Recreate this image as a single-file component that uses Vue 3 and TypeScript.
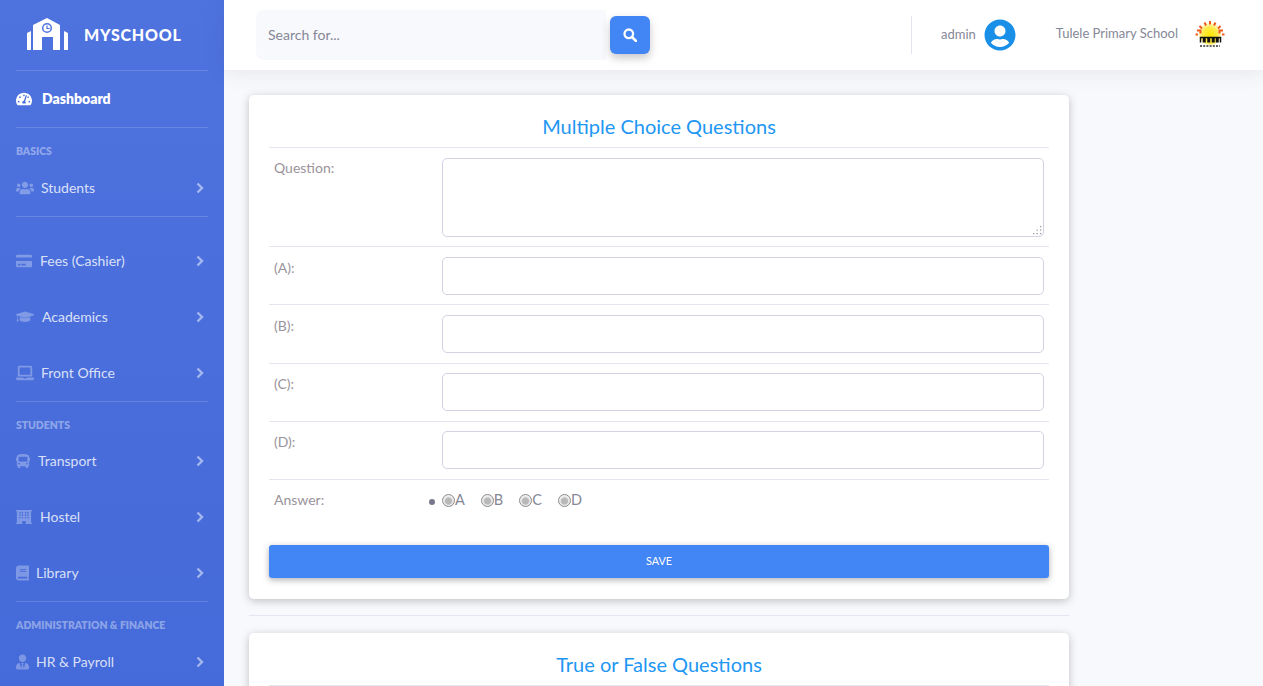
<script setup lang="ts">
interface NavItem { label: string; view: string; icon: string; w: number; gap: number }
type Block = { heading?: string; items: NavItem[]; short?: boolean };

const users = 'M96 224c35.3 0 64-28.7 64-64s-28.7-64-64-64-64 28.7-64 64 28.7 64 64 64zm448 0c35.3 0 64-28.7 64-64s-28.7-64-64-64-64 28.7-64 64 28.7 64 64 64zm32 32h-64c-17.6 0-33.5 7.1-45.1 18.6 40.3 22.1 68.9 62 75.1 109.4h66c17.7 0 32-14.3 32-32v-32c0-35.3-28.7-64-64-64zm-256 0c61.9 0 112-50.1 112-112S381.9 32 320 32 208 82.1 208 144s50.1 112 112 112zm76.8 32h-8.3c-20.8 10-43.9 16-68.5 16s-47.6-6-68.5-16h-8.3C179.6 288 128 339.6 128 403.2V432c0 26.5 21.5 48 48 48h288c26.5 0 48-21.5 48-48v-28.8c0-63.6-51.6-115.2-115.2-115.2zm-223.7-13.4C161.5 263.1 145.6 256 128 256H64c-35.3 0-64 28.7-64 64v32c0 17.7 14.3 32 32 32h65.9c6.3-47.4 34.9-87.3 75.2-109.4z';
const card = 'M0 432c0 26.5 21.5 48 48 48h480c26.5 0 48-21.5 48-48V256H0v176zm192-68c0-6.6 5.4-12 12-12h136c6.6 0 12 5.4 12 12v40c0 6.6-5.4 12-12 12H204c-6.6 0-12-5.4-12-12v-40zm-128 0c0-6.6 5.4-12 12-12h72c6.6 0 12 5.4 12 12v40c0 6.6-5.4 12-12 12H76c-6.6 0-12-5.4-12-12v-40zM576 80v48H0V80c0-26.5 21.5-48 48-48h480c26.5 0 48 21.5 48 48z';
const cap = 'M622 153L343 67c-15-5-31-5-46 0L18 153c-24 7-24 39 0 46l49 15c-11 14-18 31-19 50-6 4-10 10-10 18 0 7 4 13 9 17L24 392c-2 10 5 20 16 20h32c10 0 18-10 16-20L64 299c5-4 9-10 9-17 0-8-4-14-11-18 1-18 10-34 24-44l211 65c10 3 28 7 46 0l279-86c24-7 24-39 0-46zM352 298c-29 9-53 4-65 0l-145-45-14 114c0 35 86 64 192 64s192-29 192-64l-14-114z';
const laptop = 'M624 416H381.500c-.7 19.800-14.700 32-32.700 32H288c-18.700 0-33-17.500-32.800-32H16c-8.800 0-16 7.200-16 16v16c0 35.200 28.800 64 64 64h512c35.200 0 64-28.800 64-64v-16c0-8.800-7.200-16-16-16zM576 48c0-26.400-21.600-48-48-48H112C85.600 0 64 21.600 64 48v336h512V48zm-64 272H128V64h384v256z';
const bus = 'M488 128h-8V80c0-44.800-99.200-80-224-80S32 35.200 32 80v48h-8c-13.300 0-24 10.700-24 24v80c0 13.300 10.700 24 24 24h8v160c0 17.700 14.300 32 32 32v32c0 17.700 14.300 32 32 32h32c17.700 0 32-14.300 32-32v-32h192v32c0 17.700 14.300 32 32 32h32c17.700 0 32-14.300 32-32v-32c17.700 0 32-14.300 32-32V256h8c13.300 0 24-10.700 24-24v-80c0-13.300-10.700-24-24-24zM96 96h320v176H96zm16 288c-17.700 0-32-14.300-32-32s14.300-32 32-32 32 14.300 32 32-14.300 32-32 32zm288 0c-17.700 0-32-14.300-32-32s14.300-32 32-32 32 14.300 32 32-14.300 32-32 32z';
const windows = [120, 208, 320, 408]
  .flatMap((x) => [80, 168, 256].map((y) => `M${x} ${y}h48v48h-48z`))
  .join('');
const hotel = 'M0 0h576v48h-32v416h32v48H352v-80c0-18-14-32-32-32h-64c-18 0-32 14-32 32v80H0v-48h32V48H0z' + windows;
const book = 'M448 360V24c0-13.300-10.700-24-24-24H96C43 0 0 43 0 96v320c0 53 43 96 96 96h328c13.300 0 24-10.700 24-24v-16c0-7.500-3.500-14.300-8.900-18.700-4.200-15.400-4.200-59.300 0-74.700 5.400-4.300 8.900-11.100 8.900-18.600zM128 134c0-3.300 2.700-6 6-6h212c3.300 0 6 2.700 6 6v20c0 3.300-2.700 6-6 6H134c-3.300 0-6-2.700-6-6zm0 64c0-3.300 2.700-6 6-6h212c3.300 0 6 2.700 6 6v20c0 3.300-2.700 6-6 6H134c-3.300 0-6-2.700-6-6zm253.400 250H96c-17.700 0-32-14.300-32-32 0-17.600 14.400-32 32-32h285.400c-1.900 17.100-1.900 46.900 0 64z';
const tie = 'M224 256c70.700 0 128-57.300 128-128S294.700 0 224 0 96 57.300 96 128s57.300 128 128 128zm95.800 32.600L272 480l-32-136 32-56h-96l32 56-32 136-47.800-191.400C56.900 292 0 350.300 0 422.400V464c0 26.500 21.500 48 48 48h352c26.500 0 48-21.500 48-48v-41.600c0-72.100-56.900-130.400-128.200-133.800z';

const blocks: Block[] = [
  { heading: 'Basics', items: [{ label: 'Students', view: '0 0 640 512', icon: users, w: 18, gap: 7 }] },
  { items: [
    { label: 'Fees (Cashier)', view: '0 0 576 512', icon: card, w: 16, gap: 8 },
    { label: 'Academics', view: '0 0 640 512', icon: cap, w: 18, gap: 8 },
    { label: 'Front Office', view: '0 0 640 512', icon: laptop, w: 18, gap: 7 },
  ] },
  { heading: 'Students', short: true, items: [
    { label: 'Transport', view: '0 0 512 512', icon: bus, w: 14, gap: 8 },
    { label: 'Hostel', view: '0 0 576 512', icon: hotel, w: 16, gap: 8 },
    { label: 'Library', view: '0 0 448 512', icon: book, w: 13, gap: 7 },
  ] },
  { heading: 'Administration & Finance', items: [{ label: 'HR & Payroll', view: '0 0 448 512', icon: tie, w: 13, gap: 7 }] },
];
const options = ['(A):', '(B):', '(C):', '(D):'];
const answers = ['A', 'B', 'C', 'D'];
const query = '';
</script>

<template>
  <div class="app">
    <aside class="sidebar">
      <div class="brand">
        <svg class="brand-icon" viewBox="0 0 41 32" aria-hidden="true">
          <path fill="#fff" d="M20 0 L33 7 V32 H26 V19 H15 V32 H6 V7 Z"/>
          <path fill="#fff" d="M0 15 L4 13 V32 H0 Z M37 13 L41 15 V32 H37 Z"/>
          <circle cx="20" cy="10" r="4.300" fill="#fff" stroke="#4e73df" stroke-width="1.500"/>
          <path d="M20 7.500 V10.500 H22.800" fill="none" stroke="#4e73df" stroke-width="1.200"/>
        </svg>
        <span class="brand-text">MYSCHOOL</span>
      </div>
      <hr class="rule" />
      <a class="nav-link active">
        <svg class="nav-icon" width="16" height="16" viewBox="0 0 576 512" aria-hidden="true"><path fill="#fff" d="M288 32C128.940 32 0 160.940 0 320c0 52.800 14.250 102.260 39.060 144.800 5.610 9.620 16.300 15.200 27.440 15.200h443c11.140 0 21.830-5.580 27.440-15.200C561.750 422.260 576 372.800 576 320c0-159.060-128.940-288-288-288zm0 64c14.710 0 26.580 10.130 30.320 23.650-1.110 2.260-2.640 4.230-3.450 6.670l-9.220 27.670c-5.130 3.490-10.970 6.010-17.640 6.010-17.670 0-32-14.330-32-32S270.330 96 288 96zM96 384c-17.670 0-32-14.330-32-32s14.330-32 32-32 32 14.330 32 32-14.330 32-32 32zm48-160c-17.670 0-32-14.330-32-32s14.330-32 32-32 32 14.330 32 32-14.330 32-32 32zm246.770-72.410l-61.330 184C343.130 347.330 352 364.540 352 384c0 11.720-3.380 22.550-8.880 32H232.880c-5.500-9.450-8.880-20.280-8.880-32 0-33.940 26.500-61.430 59.900-63.590l61.340-184.010c4.170-12.560 17.730-19.450 30.360-15.170 12.570 4.190 19.350 17.770 15.170 30.360zm14.660 57.200l15.520-46.550c3.470-1.290 7.130-2.230 11.050-2.230 17.670 0 32 14.330 32 32s-14.330 32-32 32c-11.380-.01-20.890-6.280-26.570-15.220zM480 384c-17.670 0-32-14.330-32-32s14.330-32 32-32 32 14.330 32 32-14.330 32-32 32z"/></svg>
        <span class="nav-label dash">Dashboard</span>
      </a>
      <hr class="rule spaced" />
      <template v-for="(block, i) in blocks" :key="i">
        <div v-if="block.heading" class="heading" :class="{ short: block.short }">{{ block.heading }}</div>
        <a v-for="item in block.items" :key="item.label" class="nav-link">
          <svg class="nav-icon" :width="item.w" height="16" :viewBox="item.view" aria-hidden="true"><path fill="#fff" fill-opacity=".3" fill-rule="evenodd" :d="item.icon" /></svg>
          <span class="nav-label" :style="{ marginLeft: item.gap + 'px' }">{{ item.label }}</span>
          <svg class="chevron" width="8" height="12" viewBox="0 0 8 12" aria-hidden="true"><path d="M1.500 1.500 L6 6 L1.500 10.500" fill="none" stroke="#fff" stroke-opacity=".5" stroke-width="2.400"/></svg>
        </a>
        <hr v-if="i < blocks.length - 1" class="rule spaced" />
      </template>
    </aside>

    <div class="main">
      <header class="topbar">
        <div class="search">
          <input class="search-input" type="text" placeholder="Search for..." :value="query" />
          <button class="search-btn" type="button" aria-label="Search">
            <svg width="14" height="14" viewBox="0 0 14 14" aria-hidden="true"><circle cx="5.800" cy="5.800" r="4.300" fill="none" stroke="#fff" stroke-width="2.300"/><path d="M9 9 L13 13" stroke="#fff" stroke-width="2.500" stroke-linecap="round"/></svg>
          </button>
        </div>
        <div class="divider"></div>
        <span class="admin">admin</span>
        <svg class="avatar" width="32" height="32" viewBox="0 0 496 512" aria-hidden="true">
          <circle cx="248" cy="256" r="240" fill="#fff"/>
          <path fill="#1a8fe8" d="M248 8C111 8 0 119 0 256s111 248 248 248 248-111 248-248S385 8 248 8zm0 96c48.600 0 88 39.400 88 88s-39.400 88-88 88-88-39.400-88-88 39.400-88 88-88zm0 344c-58.700 0-111.300-26.600-146.500-68.200 18.800-35.400 55.600-59.800 98.500-59.800 2.400 0 4.800.4 7.100 1.100 13 4.200 26.600 6.900 40.900 6.900 14.300 0 28-2.700 40.900-6.900 2.300-.7 4.700-1.100 7.100-1.100 42.900 0 79.700 24.400 98.500 59.800C359.300 421.400 306.700 448 248 448z"/>
        </svg>
        <span class="school">Tulele Primary School</span>
        <svg class="school-logo" width="32" height="28" viewBox="0 0 32 28" aria-hidden="true">
          <defs>
            <radialGradient id="sun" cx="50%" cy="55%" r="50%">
              <stop offset="0%" stop-color="#ffe600"/>
              <stop offset="70%" stop-color="#ffe94a"/>
              <stop offset="100%" stop-color="#fff6b0"/>
            </radialGradient>
          </defs>
          <circle cx="16" cy="14" r="11" fill="url(#sun)"/>
          <path d="M16 1v3.500M10.500 2.500l1.500 3M21.500 2.500l-1.500 3M5.500 6l2.500 2.500M26.500 6L24 8.500M3 10.500h3.500v3M29 10.500h-3.500v3M1.500 14.500h2.500M30.500 14.500H28" fill="none" stroke="#ef5a1f" stroke-width="2"/>
          <path d="M6.500 22.500v-5h3v5M11 22.500v-5h3v5M15.500 22.500v-5h3v5M20 22.500v-5h2.500v5M24 22.500v-5h2.500v5" fill="none" stroke="#111" stroke-width="1.500"/>
          <path d="M6 26h20" stroke="#333" stroke-width="1.300" stroke-dasharray="2 1.200"/>
        </svg>
      </header>

      <main class="content">
        <section class="card">
          <h2 class="title">Multiple Choice Questions</h2>
          <div class="row first">
            <label class="label">Question:</label>
            <div class="area-wrap">
              <textarea class="field area"></textarea>
              <svg class="grip" width="9" height="9" viewBox="0 0 9 9" aria-hidden="true">
                <path d="M7 0h1.300v1.300H7zM7 3.500h1.300v1.300H7zM3.500 3.500h1.300v1.300H3.500zM7 7h1.300v1.300H7zM3.500 7h1.300v1.300H3.500zM0 7h1.300v1.300H0z" fill="#9a9aa0"/>
              </svg>
            </div>
          </div>
          <div v-for="o in options" :key="o" class="row">
            <label class="label">{{ o }}</label>
            <input class="field" type="text" />
          </div>
          <div class="row answer">
            <label class="label">Answer:</label>
            <ul class="answers">
              <li>
                <span v-for="a in answers" :key="a" class="choice"><input class="radio" type="radio" name="answer" />{{ a }}</span>
              </li>
            </ul>
          </div>
          <button class="save" type="button">SAVE</button>
        </section>
        <hr class="sep" />
        <section class="card">
          <h2 class="title">True or False Questions</h2>
        </section>
      </main>
    </div>
  </div>
</template>

<style>
html, body { margin: 0; overflow: hidden; background: #f8f9fc; }
</style>

<style scoped>
.app { display: flex; height: 686px; overflow: hidden; font-family: Lato, "Open Sans", sans-serif; background: #f8f9fc; }
.sidebar { width: 224px; flex: none; background: linear-gradient(180deg, #4e73df 0%, #456ad9 100%); box-sizing: border-box; }
.brand { height: 70px; display: flex; align-items: center; padding-left: 27px; box-sizing: border-box; }
.brand-icon { width: 41px; height: 32px; margin-top: -2px; }
.brand-text { margin-left: 16px; color: #fff; font-weight: 900; font-size: 16px; letter-spacing: .8px; margin-top: -2px; }
.rule { border: 0; height: 1px; margin: 0 16px; background: rgba(255, 255, 255, .15); }
.rule.spaced { margin-bottom: 16px; }
.heading { height: 16px; line-height: 14px; padding-left: 16px; color: rgba(255, 255, 255, .4); font-size: 10.400px; font-weight: 800; text-transform: uppercase; }
.heading.short { height: 15px; }
.nav-link { display: flex; align-items: center; height: 56px; padding: 0 20px 0 16px; color: rgba(255, 255, 255, .8); font-size: 14px; box-sizing: border-box; }
.nav-label { flex: 1; margin-left: 8px; margin-top: -2px; }
.nav-label.dash { color: #fff; font-weight: 800; margin-left: 10px; }
.chevron { flex: none; }
.main { flex: 1; min-width: 0; display: flex; flex-direction: column; }
.topbar { height: 70px; flex: none; background: #fff; box-shadow: 0 2px 20px rgba(58, 59, 69, .1); display: flex; align-items: center; position: relative; }
.search { display: flex; align-items: center; margin-left: 32px; width: 394px; }
.search-input { width: 350px; height: 50px; border: 0; background: #f8f9fc; border-radius: 8px 0 0 8px; padding: 0 12px 2px; font: 14px Lato, sans-serif; color: #6e707e; box-sizing: border-box; outline: 0; }
.search-input::placeholder { color: #858796; opacity: 1; }
.search-btn { margin-left: 4px; width: 40px; height: 38px; border: 0; border-radius: 6px; background: #4285f4; display: flex; align-items: center; justify-content: center; padding: 0; box-shadow: 0 4px 8px rgba(58, 59, 69, .28); }
.divider { width: 1px; height: 38px; background: #e3e6f0; margin-left: 261px; }
.admin { margin-left: 29px; color: #858796; font-size: 13px; margin-top: -2px; }
.avatar { margin-left: 8px; }
.school { margin-left: 40px; color: #858796; font-size: 13px; margin-top: -4px; }
.school-logo { margin-left: 16px; margin-top: -2px; }
.content { flex: 1; padding: 25px 0 0 25px; width: 820px; }
.card { background: #fff; border-radius: 5px; padding: 20px 20px 21px; box-shadow: 0 2px 8px rgba(58, 59, 69, .3); }
.title { margin: 0; height: 32px; line-height: 22px; text-align: center; color: #2196f3; font-size: 20px; font-weight: 400; border-bottom: 1px solid #e3e6f0; }
.row { display: grid; grid-template-columns: 168px 1fr; padding: 9.600px 5px 0; border-bottom: 1px solid #e3e6f0; height: 58.250px; box-sizing: border-box; }
.row.first { height: 99px; padding-top: 10px; }
.row.first .label { margin-top: -1px; }
.row.answer { border-bottom: 0; height: 65px; padding-top: 9px; }
.label { color: #9a939b; font-size: 14px; line-height: 21px; }
.area-wrap { position: relative; align-self: start; height: 79px; }
.field { width: 100%; height: 38px; box-sizing: border-box; border: 1px solid #d1d3e2; border-radius: 5px; background: #fff; padding: 6px 12px; outline: 0; display: block; }
.area { height: 79px; resize: none; }
.grip { position: absolute; right: 2px; bottom: 2px; }
.answers { margin: 0; padding: 0; list-style: none; color: #858796; font-size: 14.500px; line-height: 21px; }
.answers li { position: relative; }
.answers li::before { content: ""; position: absolute; left: -13px; top: 10px; width: 6px; height: 6px; border-radius: 50%; background: #77788c; }
.choice { margin-right: 16px; color: #858796; }
.radio { appearance: none; -webkit-appearance: none; width: 13px; height: 13px; margin: 0; border-radius: 50%; border: 1px solid #8a8a8a; background: radial-gradient(circle at 50% 55%, #b8b8b8 0 3px, #e4e4e4 4px, #f4f4f4 6px); vertical-align: -2px; box-sizing: border-box; }
.save { display: block; width: 100%; height: 33px; border: 0; border-radius: 3px; background: #4285f4; color: #fff; font: 10.800px Lato, sans-serif; padding: 0 0 3px; box-shadow: 0 2px 6px rgba(58, 59, 69, .4); }
.sep { border: 0; height: 1px; background: #e3e6f0; margin: 16px 0 17px; }
</style>
